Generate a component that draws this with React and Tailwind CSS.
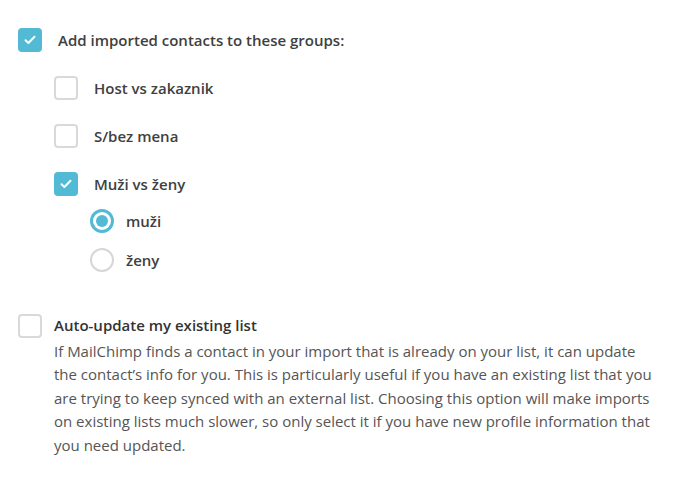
import React from "react";

const Check = ({ checked }) => (
  <span
    className={
      "flex h-6 w-6 shrink-0 items-center justify-center rounded-[4px] " +
      (checked ? "bg-[#52bad5]" : "border-2 border-[#d9d9d9] bg-white")
    }
  >
    {checked && (
      <svg width="12" height="10" viewBox="0 0 12 10" fill="none">
        <path d="M1.5 5.2 4.4 8 10.5 1.8" stroke="#fff" strokeWidth="2" strokeLinecap="round" strokeLinejoin="round" />
      </svg>
    )}
  </span>
);

const Radio = ({ checked }) => (
  <span
    className={
      "flex h-6 w-6 shrink-0 items-center justify-center rounded-full bg-white " +
      (checked ? "border-[3px] border-[#52bad5]" : "border-2 border-[#d6d6d6]")
    }
  >
    {checked && <span className="h-3 w-3 rounded-full bg-[#52bad5]" />}
  </span>
);

const groups = [
  { name: "Host vs zakaznik", checked: false },
  { name: "S/bez mena", checked: false },
  { name: "Muži vs ženy", checked: true },
];

export default function App() {
  return (
    <div
      className="min-h-screen bg-white pl-[18px] pt-[28px] text-[15px] text-[#404040]"
      style={{ fontFamily: '"Open Sans", "Liberation Sans", sans-serif' }}
    >
      <div className="flex items-center gap-4">
        <Check checked />
        <span className="font-semibold">Add imported contacts to these groups:</span>
      </div>

      <div className="ml-9 mt-6 flex flex-col gap-6">
        {groups.map((g) => (
          <div key={g.name}>
            <div className="flex items-center gap-4">
              <Check checked={g.checked} />
              <span className="font-semibold">{g.name}</span>
            </div>
            {g.checked && (
              <div className="ml-9 mt-[13px] flex flex-col gap-[15px]">
                <div className="flex items-center gap-3">
                  <Radio checked />
                  <span className="font-semibold">muži</span>
                </div>
                <div className="flex items-center gap-3">
                  <Radio />
                  <span className="font-semibold">ženy</span>
                </div>
              </div>
            )}
          </div>
        ))}
      </div>

      <div className="mt-[42px] flex gap-3">
        <Check />
        <div className="w-[600px] leading-[23.5px]">
          <div className="font-semibold text-[#333]">Auto-update my existing list</div>
          <p className="mt-[2px] text-[#555]">
            If MailChimp finds a contact in your import that is already on your list, it can update the
            contact’s info for you. This is particularly useful if you have an existing list that you are
            trying to keep synced with an external list. Choosing this option will make imports on existing
            lists much slower, so only select it if you have new profile information that you need updated.
          </p>
        </div>
      </div>
    </div>
  );
}
